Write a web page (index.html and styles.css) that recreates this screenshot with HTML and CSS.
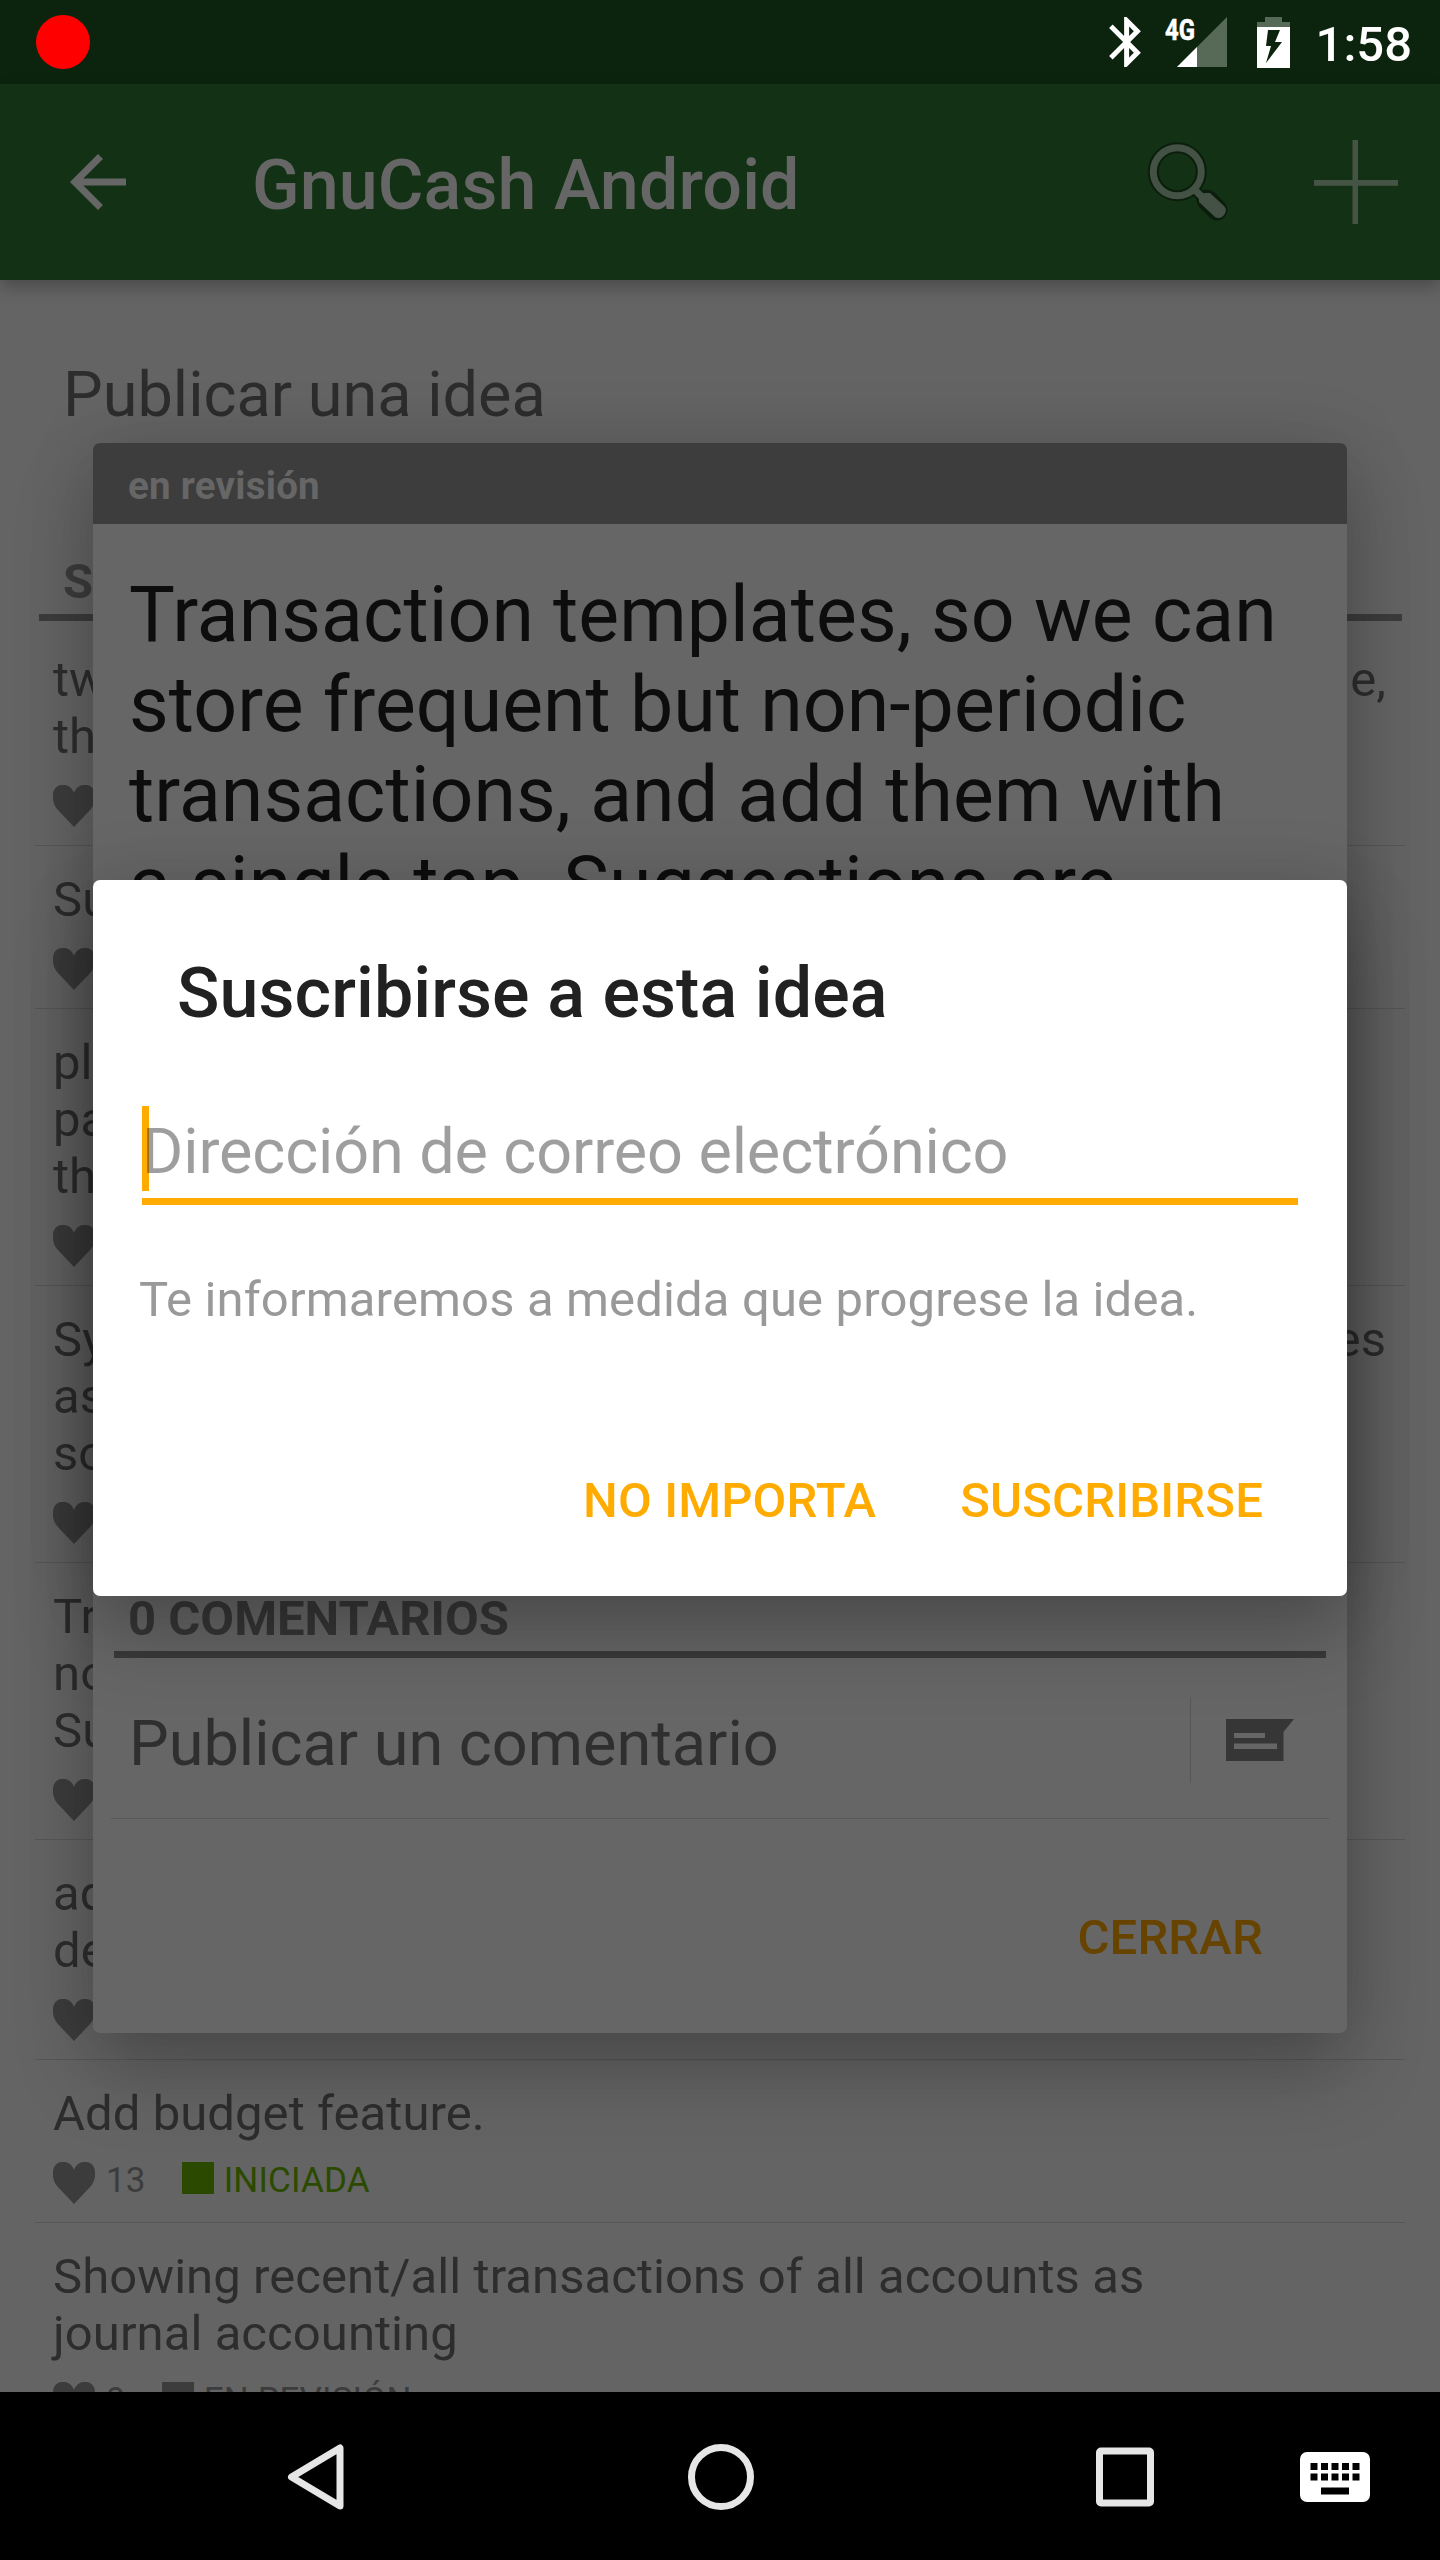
FILE: index.html
```html
<!DOCTYPE html>
<html lang="es">
<head>
<meta charset="utf-8">
<title>GnuCash Android</title>
<link rel="stylesheet" href="styles.css">
</head>
<body>
<svg class="defs" width="0" height="0">
  <symbol id="heart" viewBox="0 0 42 42"><path d="M21 42 4.500 24.500C-1.500 17.500-1.500 7 3 2.500 8-2 18-1 21 8c3-9 13-10 18-5.500 4.500 4.500 4.500 15-1.500 22z"/></symbol>
</svg>
<div class="screen">
  <header class="status">
    <span class="record"></span>
    <svg class="bluetooth" viewBox="5 2 12.71 20"><path fill="#fff" d="M17.71 7.71L12 2h-1v7.590L6.410 5 5 6.410 10.590 12 5 17.590 6.410 19 11 14.410V22h1l5.710-5.710-4.300-4.290 4.300-4.290zM13 5.830l1.880 1.880L13 9.590V5.830zm1.880 10.460L13 18.170v-3.760l1.880 1.880z"/></svg>
    <svg class="signal" viewBox="0 0 62 50">
      <path fill="#566a57" d="M62 0v50H12z"/><path fill="#fff" d="M32 30v20H12z"/>
      <text class="network" x="0" y="22.500" textLength="30" lengthAdjust="spacingAndGlyphs">4G</text>
    </svg>
    <svg class="battery" viewBox="0 0 33 51">
      <path fill="#566a57" d="M8 0h17v5h8v5H0V5h8z"/>
      <path fill="#fff" fill-rule="evenodd" d="M0 10h33v41H0zM11 13 9 29h5l-5 17 16-21h-7l5-12z"/>
    </svg>
    <span class="clock">1:58</span>
  </header>
  <nav class="appbar">
    <svg class="back" viewBox="0 0 24 24"><path fill="#666" d="M20 11H7.830l5.590-5.590L12 4l-8 8 8 8 1.410-1.410L7.830 13H20v-2z"/></svg>
    <h1 class="appbar-title">GnuCash Android</h1>
    <svg class="search" viewBox="0 0 84 84">
      <g stroke="#0b1e0c" fill="none"><circle cx="31.300" cy="31.700" r="24" stroke-width="11"/><path stroke-width="11" d="m48 49 8 8"/><path stroke-width="21" stroke-linejoin="round" stroke-linecap="round" d="m61 60 10 10"/></g>
      <g stroke="#435244" fill="none"><circle cx="31.300" cy="31.700" r="24" stroke-width="7"/><path stroke-width="7" d="m47 48 9 9"/></g>
      <path fill="#435244" d="M53 58c0-2 3-5 6-5h5l14 13c3 3 2 6 0 9s-6 4-9 2L53 62z"/>
    </svg>
    <svg class="plus" viewBox="0 0 84 84"><path fill="#465446" d="M38.500 0h5.500v40H84v5.700H44V84h-5.500V45.700H0V40h38.500z"/></svg>
  </nav>
  <main class="content">
    <div class="post">Publicar una idea</div>
    <h2 class="section">SUGERENCIAS</h2>
    <ul class="ideas">
      <li class="idea"><div class="line"><span>two</span><span>de,</span></div><div class="line"><span>the</span></div><div class="meta"><svg class="heart"><use href="#heart"/></svg></div></li>
      <li class="idea"><div class="line"><span>Su</span></div><div class="meta"><svg class="heart"><use href="#heart"/></svg></div></li>
      <li class="idea"><div class="line"><span>pl</span></div><div class="line"><span>pa</span></div><div class="line"><span>th</span></div><div class="meta"><svg class="heart"><use href="#heart"/></svg></div></li>
      <li class="idea"><div class="line"><span>Sy</span><span>es</span></div><div class="line"><span>as</span></div><div class="line"><span>so</span></div><div class="meta"><svg class="heart"><use href="#heart"/></svg></div></li>
      <li class="idea"><div class="line"><span>Tr</span></div><div class="line"><span>no</span></div><div class="line"><span>Su</span></div><div class="meta"><svg class="heart"><use href="#heart"/></svg></div></li>
      <li class="idea"><div class="line"><span>ad</span></div><div class="line"><span>de</span></div><div class="meta"><svg class="heart"><use href="#heart"/></svg></div></li>
      <li class="idea"><div class="line"><span>Add budget feature.</span></div><div class="meta"><svg class="heart"><use href="#heart"/></svg><span class="votes">13</span><span class="state started">INICIADA</span></div></li>
      <li class="idea"><div class="line"><span>Showing recent/all transactions of all accounts as</span></div><div class="line"><span>journal accounting</span></div><div class="meta"><svg class="heart"><use href="#heart"/></svg><span class="votes">9</span><span class="state">EN REVISIÓN</span></div></li>
    </ul>
  </main>
  <footer class="navbar">
    <svg class="nav-back" viewBox="0 0 58 68"><path fill="none" stroke="#e6e6e6" stroke-width="7" stroke-linejoin="round" d="M53 5v58L4.500 34z"/></svg>
    <svg class="nav-home" viewBox="0 0 68 68"><circle cx="34" cy="34" r="29.500" fill="none" stroke="#e6e6e6" stroke-width="7"/></svg>
    <svg class="nav-recent" viewBox="0 0 58 60"><rect x="3.500" y="4" width="51" height="52" rx="1.500" fill="none" stroke="#e6e6e6" stroke-width="7"/></svg>
    <svg class="nav-keyboard" viewBox="0 0 70 50"><path fill="#fff" fill-rule="evenodd" d="M7 0h56a7 7 0 0 1 7 7v36a7 7 0 0 1-7 7H7a7 7 0 0 1-7-7V7a7 7 0 0 1 7-7zM10.500 11v7h7v-7zm10.500 0v7h7v-7zm10.500 0v7h7v-7zm10.500 0v7h7v-7zm10.500 0v7h7v-7zM10.500 21.500v7h7v-7zm10.500 0v7h7v-7zm10.500 0v7h7v-7zm10.500 0v7h7v-7zm10.500 0v7h7v-7zM21 35.500v7h28v-7z"/></svg>
  </footer>

  <section class="dialog detail">
    <div class="detail-state">en revisión</div>
    <div class="detail-text">Transaction templates, so we can<br>store frequent but non-periodic<br>transactions, and add them with<br>a single tap. Suggestions are</div>
    <h3 class="comments">0 COMENTARIOS</h3>
    <div class="comment-row">
      <span class="comment-field">Publicar un comentario</span>
      <span class="comment-rule"></span>
      <svg class="comment-icon" viewBox="0 0 68 42"><path fill="#363636" fill-rule="evenodd" d="M0 0h68L57.500 13v29H0zM8 14v5h31v-5zm0 10.500v5.500h43v-5.500z"/></svg>
    </div>
    <div class="actions close"><span>CERRAR</span></div>
  </section>

  <section class="dialog subscribe">
    <h2 class="subscribe-title">Suscribirse a esta idea</h2>
    <div class="email"><span class="caret"></span><span class="email-hint">Dirección de correo electrónico</span></div>
    <p class="note">Te informaremos a medida que progrese la idea.</p>
    <div class="actions"><span>NO IMPORTA</span><span>SUSCRIBIRSE</span></div>
  </section>
</div>
</body>
</html>
```
FILE: styles.css
```css
* { box-sizing: border-box; margin: 0; padding: 0; }
body { font-family: Roboto, sans-serif; background: #000; }
.defs { position: absolute; }
svg { display: block; flex: none; }

.screen {
  position: relative;
  display: flex;
  flex-direction: column;
  width: 1440px;
  height: 2560px;
  overflow: hidden;
}

.status {
  display: flex;
  align-items: center;
  height: 84px;
  padding: 0 28px 0 36px;
  background: #0c240e;
  flex: none;
}
.record { width: 54px; height: 54px; margin-right: auto; border-radius: 50%; background: #f00; }
.bluetooth { width: 32px; height: 50px; margin-right: 24px; }
.signal { width: 62px; height: 50px; margin-right: 30px; overflow: visible; }
.network { font: 700 30px Roboto, sans-serif; fill: #fff; stroke: #fff; stroke-width: .6px; }
.battery { width: 33px; height: 51px; margin-right: 25px; }
.clock { width: 97px; padding-top: 5px; font-size: 49px; line-height: 57px; font-weight: 500; color: #fff; text-align: right; white-space: nowrap; }

.appbar {
  position: relative;
  z-index: 1;
  display: flex;
  align-items: center;
  height: 196px;
  padding: 0 42px 0 56px;
  background: #133114;
  box-shadow: 0 7px 16px rgba(0, 0, 0, .26);
  flex: none;
}
.back { width: 84px; height: 84px; }
.appbar-title { flex: 1; margin-left: 112px; padding-top: 6px; font-size: 70px; line-height: 82px; font-weight: 500; letter-spacing: .08px; color: #666; }
.search { width: 84px; height: 84px; margin-right: 84px; }
.plus { width: 84px; height: 84px; }

.content { flex: 1; min-height: 0; overflow: hidden; background: #646464; }
.post { margin: 78px 0 0 63px; font-size: 63px; line-height: 74px; color: #2d2d2d; }
.section {
  margin: 121px 38px 0 39px;
  padding: 0 0 4px 24px;
  border-bottom: 7px solid #3c3c3c;
  font-size: 49px;
  line-height: 57px;
  color: #3c3c3c;
}
.ideas { margin: 5px 35px 0; list-style: none; }
.idea { padding: 25px 18px 18px; border-bottom: 1px solid #575757; }
.line { display: flex; justify-content: space-between; padding-right: 1px; font-size: 49px; line-height: 57px; letter-spacing: .07px; color: #2d2d2d; white-space: nowrap; }
.meta { display: flex; height: 42px; margin-top: 20px; font-size: 35px; line-height: 37px; letter-spacing: .15px; color: #3c3c3c; }
.heart { width: 42px; height: 42px; fill: #3c3c3c; }
.votes { margin: 0 36px 0 11px; }
.state { display: flex; gap: 10px; }
.state::before { content: ""; width: 32px; height: 32px; background: currentColor; }
.started { color: #2b4a00; }

.navbar {
  display: flex;
  align-items: center;
  height: 168px;
  padding: 2px 70px 0 287px;
  background: #000;
  flex: none;
}
.nav-back { width: 58px; height: 68px; margin-right: 342px; }
.nav-home { width: 68px; height: 68px; margin-right: 341px; }
.nav-recent { width: 58px; height: 60px; margin-right: auto; }
.nav-keyboard { width: 70px; height: 50px; }

.dialog {
  position: absolute;
  left: 93px;
  width: 1254px;
  border-radius: 7px;
  display: flex;
  flex-direction: column;
  box-shadow: 0 40px 80px rgba(0, 0, 0, .22), 0 0 70px rgba(0, 0, 0, .12);
}
.detail { top: 443px; height: 1590px; background: #666; }
.detail-state {
  height: 81px;
  padding-left: 35px;
  border-radius: 7px 7px 0 0;
  background: #3d3d3d;
  font-size: 38.5px;
  line-height: 86px;
  font-weight: 700;
  letter-spacing: .25px;
  color: #666;
}
.detail-text { height: 1066px; padding: 46px 35px 0 36px; font-size: 77px; line-height: 90px; letter-spacing: .05px; color: #0d0d0d; white-space: nowrap; }
.comments {
  margin: 0 21px;
  padding: 0 14px 4px;
  border-bottom: 7px solid #3a3a3a;
  font-size: 49px;
  line-height: 57px;
  color: #363636;
}
.comment-row {
  display: flex;
  align-items: center;
  height: 161px;
  margin: 0 18px;
  padding: 4px 35px 0 18px;
  border-bottom: 1px solid #575757;
}
.comment-field { flex: 1; padding-top: 8px; font-size: 63px; line-height: 74px; color: #2f2f2f; }
.comment-rule { width: 1px; height: 85px; margin-right: 35px; background: #575757; }
.comment-icon { width: 68px; height: 42px; }

.actions {
  display: flex;
  justify-content: flex-end;
  gap: 84px;
  margin-top: 144px;
  padding-right: 84px;
  font-size: 49px;
  line-height: 57px;
  font-weight: 500;
  letter-spacing: .15px;
  color: #ffab00;
}
.close { margin-top: 90px; color: #640; }

.subscribe { top: 880px; height: 716px; padding-top: 72px; background: #fff; }
.subscribe-title { padding-left: 84px; font-size: 70px; line-height: 82px; font-weight: 500; letter-spacing: .07px; color: #212121; }
.email {
  position: relative;
  height: 99px;
  margin: 72px 49px 0;
  padding-top: 9px;
  border-bottom: 7px solid #ffab00;
  font-size: 63px;
  line-height: 74px;
  letter-spacing: -.13px;
}
.caret { position: absolute; left: 0; top: 0; width: 7px; height: 85px; background: #ffab00; }
.email-hint { position: relative; color: rgba(0, 0, 0, .38); }
.note { margin-top: 66px; padding-left: 46px; font-size: 49px; line-height: 57px; letter-spacing: .14px; color: #999; white-space: nowrap; }
```
